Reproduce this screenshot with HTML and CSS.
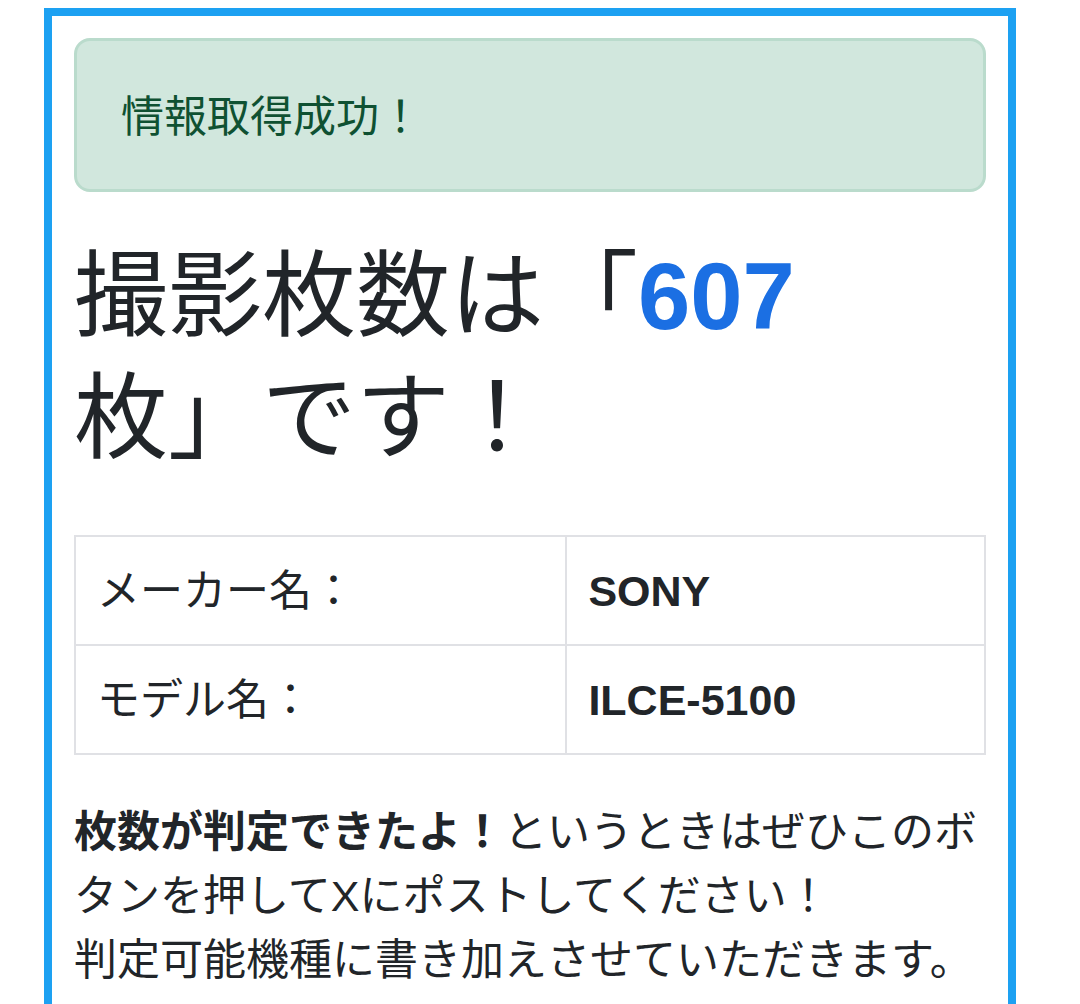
FILE: index.html
```html
<!DOCTYPE html>
<html lang="ja">
<head>
  <meta charset="UTF-8">
  <title>撮影枚数チェッカー</title>
  <link rel="stylesheet" href="styles.css">
</head>
<body>

  <div class="result-box">
    <div class="alert-success">情報取得成功！</div>

    <h1 class="shot-count">撮影枚数は「<span class="count-num">607</span>枚」です！</h1>

    <table class="info-table">
      <tr>
        <td class="label">メーカー名：</td>
        <td class="value">SONY</td>
      </tr>
      <tr>
        <td class="label">モデル名：</td>
        <td class="value">ILCE-5100</td>
      </tr>
    </table>

    <p class="post-note">
      <strong>枚数が判定できたよ！</strong>というときはぜひこのボタンを押してXにポストしてください！<br>
      判定可能機種に書き加えさせていただきます。
    </p>
  </div>

</body>
</html>
```

FILE: styles.css
```css
body {
  margin: 0;
  font-family: "Liberation Sans", "Noto Sans CJK JP", sans-serif;
  font-size: 43px;
  line-height: 64px;
  color: #212529;
  background-color: #fff;
}

.result-box {
  box-sizing: border-box;
  width: 972px;
  margin: 8px 0 0 44px;
  padding: 22px 22px 120px;
  border: 8px solid #1da1f2;
  border-bottom: none;
}

.alert-success {
  padding: 44px 44px 40px;
  margin-bottom: 44px;
  background-color: #d1e7dd;
  border: 3px solid #badbcc;
  border-radius: 16px;
  color: #0f5132;
}

.shot-count {
  max-width: 760px;
  margin: 0 0 55px;
  font-size: 94px;
  line-height: 122px;
  font-weight: normal;
}

.count-num {
  color: #1b6fe3;
  font-weight: bold;
}

.info-table {
  width: 100%;
  border-collapse: collapse;
  margin-bottom: 45px;
}

.info-table td {
  padding: 21.5px 21px;
  border: 2px solid #e0e1e5;
}

.info-table .label {
  width: 54%;
}

.info-table .value {
  font-weight: bold;
}

.post-note {
  margin: 0;
}
```
